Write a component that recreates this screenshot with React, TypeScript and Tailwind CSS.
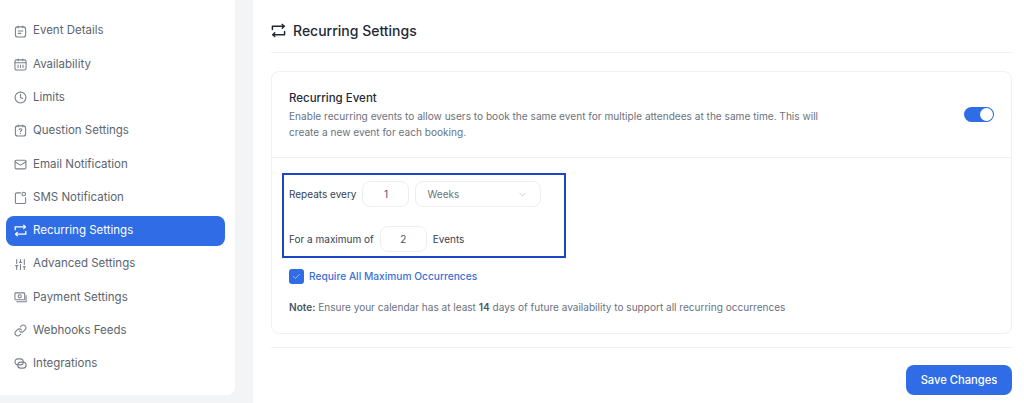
import React from "react";
import { ChevronDown, Check, Clock, Link, Mail, SlidersVertical } from "lucide-react";

function RepeatIcon({ className }: { className?: string }) {
  return (
    <svg viewBox="0 0 16 16" fill="none" stroke="currentColor" strokeWidth="1.6" strokeLinecap="round" strokeLinejoin="round" className={className}>
      <path d="M1.5 7V3.5h12.5" />
      <path d="M12 1.5l2 2-2 2" />
      <path d="M14.5 9v3.5H2" />
      <path d="M4 10.5l-2 2 2 2" />
    </svg>
  );
}

function EventIcon({ className }: { className?: string }) {
  return (
    <svg viewBox="0 0 14 14" fill="none" stroke="currentColor" strokeWidth="1.15" strokeLinecap="round" className={className}>
      <rect x="1.5" y="2" width="11" height="11" rx="2.5" />
      <path d="M4.5 1v2M9.5 1v2M4.5 6.5h5M4.5 9h3" />
    </svg>
  );
}

function CalendarIcon({ className }: { className?: string }) {
  return (
    <svg viewBox="0 0 14 14" fill="none" stroke="currentColor" strokeWidth="1.15" strokeLinecap="round" className={className}>
      <rect x="1" y="2" width="12" height="11" rx="2" />
      <path d="M4.5 1v2M9.5 1v2M1 5.2h12M4.3 7.6v2.6M7 7.6v2.6M9.7 7.6v2.6" />
    </svg>
  );
}

function QuestionIcon({ className }: { className?: string }) {
  return (
    <svg viewBox="0 0 14 14" fill="none" stroke="currentColor" strokeWidth="1.15" strokeLinecap="round" className={className}>
      <rect x="1.5" y="2" width="11" height="11" rx="2.5" />
      <path d="M4.5 1v2M9.5 1v2M5.6 6.2c.2-1.5 2.9-1.4 2.9.1 0 .9-1.5 1-1.5 2M7 10.3v.1" />
    </svg>
  );
}

function SmsIcon({ className }: { className?: string }) {
  return (
    <svg viewBox="0 0 14 14" fill="none" stroke="currentColor" strokeWidth="1.15" strokeLinecap="round" className={className}>
      <path d="M7 2H3a1.5 1.5 0 0 0-1.5 1.5V12a1.5 1.5 0 0 0 1.5 1.5h8a1.5 1.5 0 0 0 1.5-1.5V7" />
      <circle cx="10.5" cy="3.2" r="1.9" />
    </svg>
  );
}

function PaymentIcon({ className }: { className?: string }) {
  return (
    <svg viewBox="0 0 14 14" fill="none" stroke="currentColor" strokeWidth="1.15" strokeLinecap="round" className={className}>
      <rect x="1" y="2" width="10.5" height="7.5" rx="1" />
      <circle cx="6.2" cy="5.7" r="1.7" />
      <path d="M3 11.5h10V5" />
    </svg>
  );
}

function IntegrationIcon({ className }: { className?: string }) {
  return (
    <svg viewBox="0 0 14 14" fill="none" stroke="currentColor" strokeWidth="1.15" className={className}>
      <rect x="1" y="2" width="9" height="6.5" rx="3.2" />
      <rect x="4" y="5.5" width="9" height="6.5" rx="3.2" />
    </svg>
  );
}

const navItems = [
  { label: "Event Details", Icon: EventIcon },
  { label: "Availability", Icon: CalendarIcon },
  { label: "Limits", Icon: Clock },
  { label: "Question Settings", Icon: QuestionIcon },
  { label: "Email Notification", Icon: Mail },
  { label: "SMS Notification", Icon: SmsIcon },
  { label: "Recurring Settings", Icon: RepeatIcon, active: true },
  { label: "Advanced Settings", Icon: SlidersVertical },
  { label: "Payment Settings", Icon: PaymentIcon },
  { label: "Webhooks Feeds", Icon: Link },
  { label: "Integrations", Icon: IntegrationIcon },
];

export default function App() {
  return (
    <div className="flex h-[403px] w-[1024px] overflow-hidden bg-[#f3f4f5] font-['Inter',sans-serif]">
      {/* Sidebar */}
      <aside className="h-[395px] w-[235px] shrink-0 rounded-br-lg bg-white pl-[6px] pr-[10px] pt-[16px]">
        <nav className="flex flex-col gap-[3.3px]">
          {navItems.map(({ label, Icon, active }) => (
            <div
              key={label}
              className={`flex h-[30px] items-center gap-[7px] rounded-lg pl-[8px] text-[11.5px] ${
                active ? "bg-[#2f6ce5] text-white" : "text-[#5c6470]"
              }`}
            >
              <span className={`flex w-[12px] shrink-0 justify-center ${active ? "text-white" : "text-[#7a818c]"}`}>
                <Icon className="h-[13px] w-[13px] shrink-0" />
              </span>
              <span>{label}</span>
            </div>
          ))}
        </nav>
      </aside>

      {/* Main panel */}
      <main className="ml-[18px] flex-1 bg-white pl-[18px] pr-[12px]">
        <header className="flex h-[53px] items-center gap-[7px] border-b border-[#f0f1f3] pt-[8px]">
          <RepeatIcon className="h-[15px] w-[15px] text-[#1f2937]" />
          <h1 className="text-[14px] font-medium text-[#1f2937]">Recurring Settings</h1>
        </header>

        <section className="mt-[18px] h-[263px] rounded-lg border border-[#f0f1f3]">
          <div className="flex h-[86px] items-center justify-between border-b border-[#f0f1f3] pl-[17px] pr-[17px]">
            <div className="w-[532px]">
              <h2 className="mb-[2px] text-[11.5px] font-medium leading-[16px] text-[#1f2937]">Recurring Event</h2>
              <p className="text-[10.1px] leading-[16px] text-[#6b7280]">
                Enable recurring events to allow users to book the same event for multiple attendees at the same time. This will create a new event for each booking.
              </p>
            </div>
            <div className="flex h-[15px] w-[30px] items-center justify-end rounded-full bg-[#2f6ce5] pr-[1px]">
              <span className="h-[13px] w-[13px] rounded-full bg-white" />
            </div>
          </div>

          <div className="pl-[10px] pt-[15px]">
            <div className="flex h-[85px] w-[284px] flex-col gap-[19px] border-2 border-[#1d45c4] pl-[5px] pt-[6px]">
              <div className="flex items-center text-[10px] text-[#374151]">
                <span>Repeats every</span>
                <span className="ml-[6px] flex h-[26px] w-[47px] items-center justify-center rounded-lg border border-[#eceef0] text-[#4b5563]">1</span>
                <span className="ml-[6px] flex h-[26px] w-[126px] items-center justify-between rounded-lg border border-[#eceef0] pl-[11px] pr-[12px] text-[#6b7280]">
                  Weeks
                  <ChevronDown className="h-[11px] w-[11px] text-[#9ca3af]" strokeWidth={1.2} />
                </span>
              </div>
              <div className="flex items-center text-[10px] text-[#374151]">
                <span>For a maximum of</span>
                <span className="ml-[6px] flex h-[26px] w-[47px] items-center justify-center rounded-lg border border-[#eceef0] text-[#4b5563]">2</span>
                <span className="ml-[6px]">Events</span>
              </div>
            </div>

            <label className="ml-[7px] mt-[11px] flex items-center gap-[5px]">
              <span className="flex h-[15px] w-[15px] items-center justify-center rounded-[3px] bg-[#2f6ce5]">
                <Check className="h-[9px] w-[9px] text-[#c9d8f8]" strokeWidth={2} />
              </span>
              <span className="text-[10.2px] font-medium text-[#3b6fd8]">Require All Maximum Occurrences</span>
            </label>

            <p className="ml-[7px] mt-[16px] text-[10.05px] text-[#6b7280]">
              <b className="font-semibold text-[#4b5563]">Note:</b> Ensure your calendar has at least <b className="font-semibold text-[#4b5563]">14</b> days of future availability to support all recurring occurrences
            </p>
          </div>
        </section>

        <div className="mt-[13px] flex flex-col items-end border-t border-[#f0f1f3] pt-[17px]">
          <button className="h-[30px] w-[106px] rounded-lg bg-[#2f6ce5] text-[11.2px] font-medium text-white">Save Changes</button>
        </div>
      </main>
    </div>
  );
}
